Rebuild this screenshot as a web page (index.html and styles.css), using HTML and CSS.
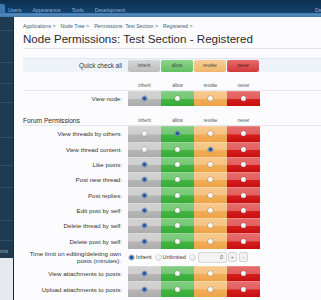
FILE: index.html
```html
<!DOCTYPE html>
<html>
<head>
<meta charset="utf-8">
<link rel="stylesheet" href="styles.css">
</head>
<body>
<header class="top">
  <nav class="tabs">
    <span class="tab-sel"></span>
    <span class="nav">Users</span>
    <span class="nav">Appearance</span>
    <span class="nav">Tools</span>
    <span class="nav">Development</span>
  </nav>
  <span class="nav nav-right">De</span>
</header>
<div class="main">
  <aside class="side">
    <div class="sec s1"></div>
    <div class="sec s2"></div>
    <div class="sec s3"></div>
    <div class="sec s4"></div>
    <div class="sec s5"></div>
    <div class="sec s6"></div>
    <div class="sec s7"></div>
    <div class="sec s8"></div>
    <div class="sec s9"></div>
    <div class="sec s10"><span>Add-ons</span></div>
    <div class="side-foot"></div>
  </aside>
  <section class="content">
    <div class="crumbs">
      <span>Applications &gt;</span>
      <span>Node Tree &gt;</span>
      <span>Permissions: Test Section &gt;</span>
      <span>Registered &gt;</span>
    </div>
    <h1 class="title">Node Permissions: Test Section - Registered</h1>

    <div class="quick">
      <div class="lbl qlbl">Quick check all</div>
      <div class="qb qi">inherit</div>
      <div class="qb qa">allow</div>
      <div class="qb qr">revoke</div>
      <div class="qb qn">never</div>
    </div>

    <div class="hrow">
      <div></div>
      <div class="hl">inherit</div>
      <div class="hl">allow</div>
      <div class="hl">revoke</div>
      <div class="hl">never</div>
    </div>
    <div class="prow">
      <div class="lbl">View node:</div>
      <div class="c ci"><span class="rd on"></span></div>
      <div class="c ca"><span class="rd"></span></div>
      <div class="c cr"><span class="rd"></span></div>
      <div class="c cn"><span class="rd"></span></div>
    </div>

    <div class="hrow group">
      <div class="gname">Forum Permissions</div>
      <div class="hl">inherit</div>
      <div class="hl">allow</div>
      <div class="hl">revoke</div>
      <div class="hl">never</div>
    </div>
    <div class="prow">
      <div class="lbl">View threads by others:</div>
      <div class="c ci"><span class="rd"></span></div>
      <div class="c ca"><span class="rd on"></span></div>
      <div class="c cr"><span class="rd"></span></div>
      <div class="c cn"><span class="rd"></span></div>
    </div>
    <div class="prow">
      <div class="lbl">View thread content:</div>
      <div class="c ci"><span class="rd"></span></div>
      <div class="c ca"><span class="rd"></span></div>
      <div class="c cr"><span class="rd on"></span></div>
      <div class="c cn"><span class="rd"></span></div>
    </div>
    <div class="prow">
      <div class="lbl">Like posts:</div>
      <div class="c ci"><span class="rd on"></span></div>
      <div class="c ca"><span class="rd"></span></div>
      <div class="c cr"><span class="rd"></span></div>
      <div class="c cn"><span class="rd"></span></div>
    </div>
    <div class="prow">
      <div class="lbl">Post new thread:</div>
      <div class="c ci"><span class="rd on"></span></div>
      <div class="c ca"><span class="rd"></span></div>
      <div class="c cr"><span class="rd"></span></div>
      <div class="c cn"><span class="rd"></span></div>
    </div>
    <div class="prow">
      <div class="lbl">Post replies:</div>
      <div class="c ci"><span class="rd on"></span></div>
      <div class="c ca"><span class="rd"></span></div>
      <div class="c cr"><span class="rd"></span></div>
      <div class="c cn"><span class="rd"></span></div>
    </div>
    <div class="prow">
      <div class="lbl">Edit post by self:</div>
      <div class="c ci"><span class="rd on"></span></div>
      <div class="c ca"><span class="rd"></span></div>
      <div class="c cr"><span class="rd"></span></div>
      <div class="c cn"><span class="rd"></span></div>
    </div>
    <div class="prow">
      <div class="lbl">Delete thread by self:</div>
      <div class="c ci"><span class="rd on"></span></div>
      <div class="c ca"><span class="rd"></span></div>
      <div class="c cr"><span class="rd"></span></div>
      <div class="c cn"><span class="rd"></span></div>
    </div>
    <div class="prow">
      <div class="lbl">Delete post by self:</div>
      <div class="c ci"><span class="rd on"></span></div>
      <div class="c ca"><span class="rd"></span></div>
      <div class="c cr"><span class="rd"></span></div>
      <div class="c cn"><span class="rd"></span></div>
    </div>
    <div class="trow">
      <div class="lbl tlbl">Time limit on editing/deleting own<br>posts (minutes):</div>
      <div class="topts">
        <span class="rd on"></span><span class="opt">Inherit</span>
        <span class="rd"></span><span class="opt">Unlimited</span>
        <span class="rd"></span>
        <span class="num">0</span>
        <span class="pm">+</span>
        <span class="pm">-</span>
      </div>
    </div>
    <div class="prow">
      <div class="lbl">View attachments to posts:</div>
      <div class="c ci"><span class="rd on"></span></div>
      <div class="c ca"><span class="rd"></span></div>
      <div class="c cr"><span class="rd"></span></div>
      <div class="c cn"><span class="rd"></span></div>
    </div>
    <div class="prow">
      <div class="lbl">Upload attachments to posts:</div>
      <div class="c ci"><span class="rd on"></span></div>
      <div class="c ca"><span class="rd"></span></div>
      <div class="c cr"><span class="rd"></span></div>
      <div class="c cn"><span class="rd"></span></div>
    </div>
  </section>
</div>
</body>
</html>
```
FILE: styles.css
```css
html, body {
  margin: 0;
  padding: 0;
  height: 300px;
  overflow: hidden;
}
body {
  font-family: "Liberation Sans", Arial, sans-serif;
  background: #fcfcfe;
  color: #333;
}
.top {
  height: 17px;
  background: linear-gradient(#0c2f4f 0%, #14406a 70%, #1b4d7c 78%, #5b91c6 80%, #3e77ae 100%);
  display: flex;
  align-items: flex-start;
  justify-content: space-between;
  overflow: hidden;
}
.tabs {
  display: flex;
  align-items: flex-start;
  height: 14px;
}
.tab-sel {
  width: 5px;
  height: 10px;
  margin-top: 4px;
  background: #3d78b1;
  border-radius: 0 2px 0 0;
}
.nav {
  font-size: 5.2px;
  color: #8db4db;
  line-height: 8px;
  margin-top: 6px;
}
.tabs .nav:nth-child(2) { margin-left: 3px; }
.tabs .nav + .nav { margin-left: 11px; }
.nav-right {
  margin-right: -3px;
  width: 9px;
  overflow: hidden;
}
.main {
  display: flex;
  height: 283px;
}
.side {
  width: 13px;
  flex: none;
  display: flex;
  flex-direction: column;
  background: #1e3a51;
  border-right: 1px solid #16293a;
}
.sec {
  border-bottom: 1px solid #2d5069;
  flex: none;
}
.s1 { height: 13px; }
.s2 { height: 31px; }
.s3 { height: 20px; }
.s4 { height: 18px; }
.s5 { height: 34px; }
.s6 { height: 27px; }
.s7 { height: 21px; }
.s8 { height: 32px; }
.s9 { height: 19px; }
.s10 {
  height: 17px;
  box-sizing: border-box;
  border-bottom: none;
  display: flex;
  justify-content: flex-end;
  align-items: flex-end;
  overflow: hidden;
  padding-right: 5px;
  padding-bottom: 3px;
  font-size: 5.5px;
  line-height: 7px;
  color: #9db6cb;
  white-space: nowrap;
}
.side-foot {
  flex: 1;
  background: #e6eaee;
}
.content {
  flex: 1;
  padding-left: 9px;
  background: #fcfcfe;
  overflow: hidden;
}
.crumbs {
  display: flex;
  gap: 5px;
  font-size: 5.2px;
  line-height: 8px;
  color: #40607e;
  margin-top: 5px;
  white-space: nowrap;
}
.title {
  font-size: 11.6px;
  font-weight: normal;
  line-height: 14px;
  color: #2a2a2a;
  margin: 2px 0 0;
  padding-bottom: 2px;
  border-bottom: 1px solid #e2e6ec;
  white-space: nowrap;
}
.quick, .hrow, .prow, .trow {
  display: grid;
  grid-template-columns: 105px 33px 33px 33px 33px 1fr;
}
.quick {
  margin-top: 9px;
  height: 13px;
  background: #eef3fa;
  border-top: 1px solid #e0e8f2;
  align-items: center;
}
.lbl {
  text-align: right;
  padding-right: 6px;
  font-size: 6.2px;
  color: #333;
  white-space: nowrap;
  align-self: center;
}
.qlbl { font-size: 6.4px; }
.qb {
  height: 12px;
  margin-right: 1px;
  border-radius: 2px;
  font-size: 4.6px;
  line-height: 12px;
  text-align: center;
  color: #444;
}
.qi { background: linear-gradient(#d8d8d8, #bcbcbc); }
.qa { background: linear-gradient(#8fd48f, #5fbf5f); }
.qr { background: linear-gradient(#f8cf98, #f0b76c); }
.qn { background: linear-gradient(#e66a6a, #d33a3a); color: #4a1a1a; }
.hrow {
  height: 10px;
  margin-top: 8px;
  border-bottom: 1px solid #e4e8ee;
  align-items: center;
}
.hrow.group {
  margin-top: 9px;
  height: 10px;
}
.hl {
  font-size: 4.6px;
  color: #555;
  text-align: center;
}
.gname {
  font-size: 6.6px;
  color: #2a2a2a;
  white-space: nowrap;
}
.prow {
  height: 15.3px;
}
.c {
  display: flex;
  align-items: center;
  justify-content: center;
}
.ci { background: linear-gradient(#e0e0e0 0%, #d2d2d2 8%, #cfcfcf 50%, #b6b6b6 56%, #acacac 100%); }
.ca { background: linear-gradient(#a2dca2 0%, #80cd80 8%, #74c874 50%, #45b345 56%, #36ab36 100%); }
.cr { background: linear-gradient(#fbdcb2 0%, #f7c98e 8%, #f6c283 50%, #f0ad56 56%, #eea448 100%); }
.cn { background: linear-gradient(#f09a9a 0%, #e66b6b 8%, #e45f5f 50%, #d41d1d 56%, #c80f0f 100%); }
.rd {
  width: 5px;
  height: 5px;
  border-radius: 50%;
  background: radial-gradient(circle at 40% 35%, #ffffff 0%, #e8e8e8 60%, #cfcfcf 100%);
  box-shadow: 0 0 0 0.5px rgba(90, 90, 90, 0.45);
  flex: none;
}
.rd.on {
  background: radial-gradient(circle, #1f4f8c 0%, #2f64a6 45%, #9db8d8 75%, #dfe8f2 100%);
}
.trow {
  height: 17.5px;
  align-items: center;
}
.tlbl {
  line-height: 7.5px;
  padding-right: 7px;
}
.topts {
  grid-column: 2 / 7;
  display: flex;
  align-items: center;
  padding-left: 1px;
  font-size: 5.6px;
  color: #333;
}
.opt { margin-left: 2px; margin-right: 4px; }
.num {
  width: 29px;
  height: 11px;
  margin-left: 3px;
  box-sizing: border-box;
  border: 1px solid #d6d6d6;
  border-radius: 2px;
  background: #f3f3f3;
  text-align: right;
  padding-right: 3px;
  line-height: 9px;
  font-size: 5px;
  color: #555;
  font-style: italic;
}
.pm {
  width: 9px;
  height: 10px;
  margin-left: 1px;
  box-sizing: border-box;
  border: 1px solid #d4d4d4;
  border-radius: 2px;
  background: #f2f2f2;
  text-align: center;
  line-height: 8px;
  font-size: 5.5px;
  color: #777;
}
.pm + .pm { margin-left: 2px; }
```
